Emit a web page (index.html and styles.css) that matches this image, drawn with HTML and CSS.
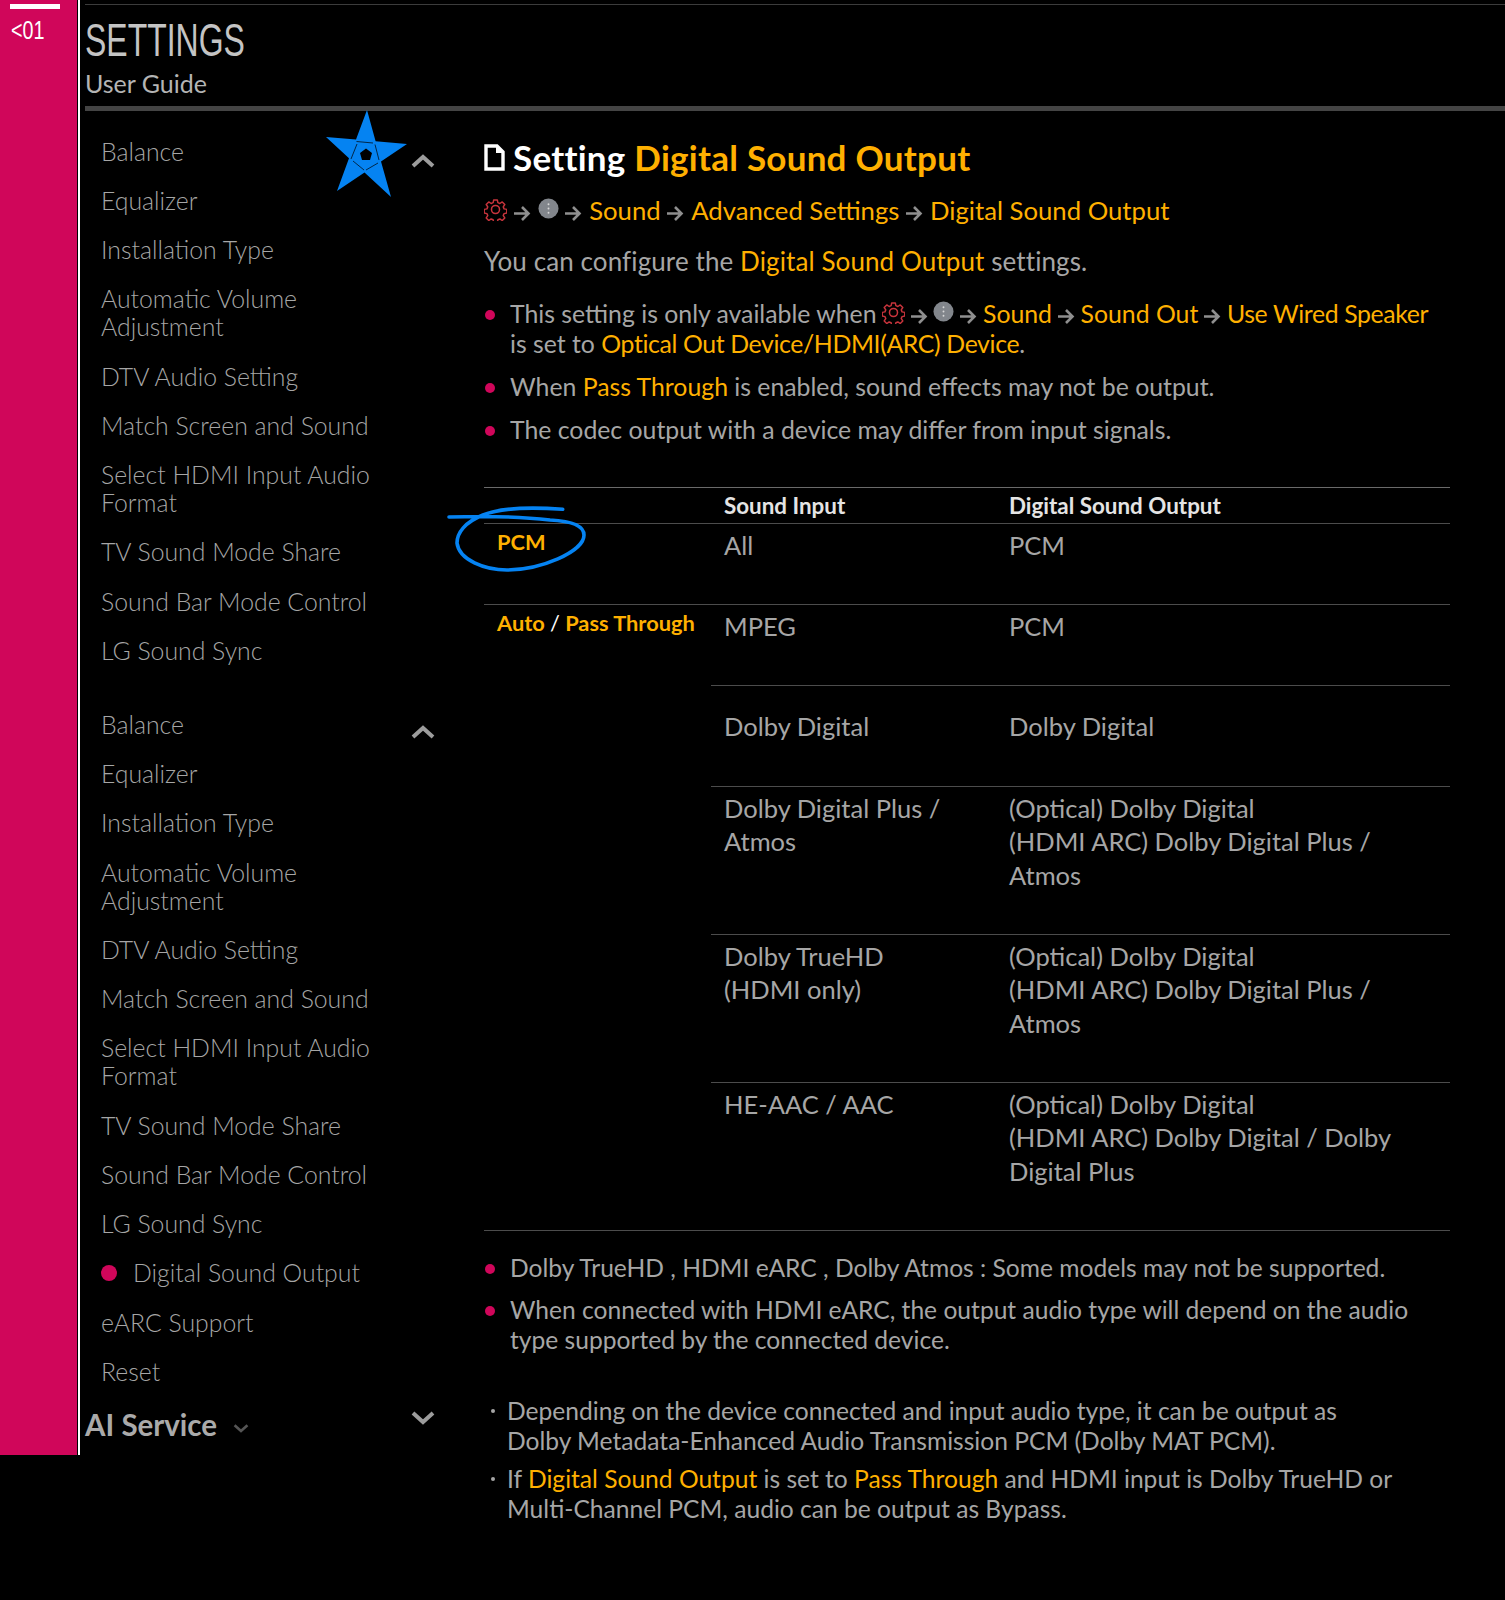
FILE: index.html
```html
<!DOCTYPE html>
<html lang="en">
<head>
<meta charset="utf-8">
<title>Settings - User Guide</title>
<link rel="stylesheet" href="styles.css">
</head>
<body>
<svg class="defs" width="0" height="0" aria-hidden="true">
  <symbol id="gear" viewBox="0 0 24 24">
    <g fill="none" stroke="#c8343c" stroke-width="1.6" stroke-linejoin="round">
      <path d="M10 1.5h4l.6 3 2.2.9 2.6-1.7 2.8 2.8-1.7 2.6.9 2.2 3 .6v4l-3 .6-.9 2.2 1.7 2.6-2.8 2.8-2.6-1.7-2.2.9-.6 3h-4l-.6-3-2.2-.9-2.6 1.7-2.8-2.8 1.7-2.6-.9-2.2-3-.6v-4l3-.6.9-2.2-1.700-2.600 2.800-2.800 2.600 1.700 2.200-.9z" transform="translate(0.6 0.6) scale(.95)"/>
      <circle cx="12" cy="12" r="4.2"/>
    </g>
  </symbol>
  <symbol id="info" viewBox="0 0 22 22">
    <circle cx="11" cy="11" r="10.500" fill="#82868c"/>
    <circle cx="11" cy="6.500" r="1" fill="#d8d8d8"/>
    <circle cx="11" cy="11" r="1" fill="#d8d8d8"/>
    <circle cx="11" cy="15.500" r="1" fill="#d8d8d8"/>
  </symbol>
  <symbol id="arrow" viewBox="0 0 17 17">
    <path d="M0 8.500h14M8 2l6.500 6.500L8 15" fill="none" stroke="#8f8f8f" stroke-width="2.600"/>
  </symbol>
  <symbol id="chev" viewBox="0 0 24 14">
    <path d="M2 12 12 3l10 9" fill="none" stroke="currentColor" stroke-width="4"/>
  </symbol>
</svg>

<div class="rail">
  <div class="rail-fill">
    <div class="rail-bar"></div>
    <div class="rail-num">&lt;01</div>
  </div>
</div>

<div class="page">
  <header class="head">
    <h1 class="head-title">SETTINGS</h1>
    <p class="head-sub">User Guide</p>
  </header>

  <div class="cols">
    <nav class="side">
      <ul class="menu">
        <li class="menu-top"><span>Balance</span><svg class="chev"><use href="#chev"/></svg></li>
        <li>Equalizer</li>
        <li>Installation Type</li>
        <li>Automatic Volume<br>Adjustment</li>
        <li>DTV Audio Setting</li>
        <li>Match Screen and Sound</li>
        <li>Select HDMI Input Audio<br>Format</li>
        <li>TV Sound Mode Share</li>
        <li>Sound Bar Mode Control</li>
        <li>LG Sound Sync</li>
      </ul>
      <ul class="menu menu-second">
        <li class="menu-top"><span>Balance</span><svg class="chev chev-second"><use href="#chev"/></svg></li>
        <li>Equalizer</li>
        <li>Installation Type</li>
        <li>Automatic Volume<br>Adjustment</li>
        <li>DTV Audio Setting</li>
        <li>Match Screen and Sound</li>
        <li>Select HDMI Input Audio<br>Format</li>
        <li>TV Sound Mode Share</li>
        <li>Sound Bar Mode Control</li>
        <li>LG Sound Sync</li>
        <li class="menu-active"><i class="menu-dot"></i>Digital Sound Output</li>
        <li>eARC Support</li>
        <li>Reset</li>
      </ul>
      <div class="ai">
        <span class="ai-label">AI Service</span>
        <svg class="ai-small"><use href="#chev"/></svg>
        <svg class="chev chev-down"><use href="#chev"/></svg>
      </div>
    </nav>

    <main class="main">
      <h2 class="title">
        <svg class="doc" viewBox="0 0 21 27"><path d="M2 2h11l6 6v17H2z" fill="none" stroke="#fff" stroke-width="3.400"/><path d="M12 2v7h7z" fill="#fff"/></svg>
        <span>Setting <em>Digital Sound Output</em></span>
      </h2>
      <p class="crumb"><svg class="ico-gear"><use href="#gear"/></svg><svg class="ico-arrow"><use href="#arrow"/></svg><svg class="ico-info"><use href="#info"/></svg><svg class="ico-arrow"><use href="#arrow"/></svg><em>Sound</em><svg class="ico-arrow"><use href="#arrow"/></svg><em>Advanced Settings</em><svg class="ico-arrow"><use href="#arrow"/></svg><em>Digital Sound Output</em></p>
      <p class="intro">You can configure the <em>Digital Sound Output</em> settings.</p>
      <ul class="dots dots-a">
        <li>This setting is only available when <svg class="ico-gear"><use href="#gear"/></svg><svg class="ico-arrow"><use href="#arrow"/></svg><svg class="ico-info"><use href="#info"/></svg><svg class="ico-arrow"><use href="#arrow"/></svg><em>Sound</em><svg class="ico-arrow"><use href="#arrow"/></svg><em>Sound Out</em><svg class="ico-arrow"><use href="#arrow"/></svg><em class="tight">Use Wired Speaker</em><br>is set to <em class="tight">Optical Out Device/HDMI(ARC) Device</em>.</li>
        <li>When <em>Pass Through</em> is enabled, sound effects may not be output.</li>
        <li>The codec output with a device may differ from input signals.</li>
      </ul>

      <table class="grid">
        <colgroup><col class="c1"><col class="c2"><col class="c3"></colgroup>
        <thead>
          <tr><th></th><th>Sound Input</th><th>Digital Sound Output</th></tr>
        </thead>
        <tbody>
          <tr><td class="mode">PCM</td><td>All</td><td>PCM</td></tr>
          <tr><td class="mode" rowspan="5">Auto <b>/</b> Pass Through</td><td>MPEG</td><td>PCM</td></tr>
          <tr class="tall"><td>Dolby Digital</td><td>Dolby Digital</td></tr>
          <tr><td>Dolby Digital Plus /<br>Atmos</td><td>(Optical) Dolby Digital<br>(HDMI ARC) Dolby Digital Plus /<br>Atmos</td></tr>
          <tr><td>Dolby TrueHD<br>(HDMI only)</td><td>(Optical) Dolby Digital<br>(HDMI ARC) Dolby Digital Plus /<br>Atmos</td></tr>
          <tr><td>HE-AAC / AAC</td><td>(Optical) Dolby Digital<br>(HDMI ARC) Dolby Digital / Dolby<br>Digital Plus</td></tr>
        </tbody>
      </table>

      <ul class="dots dots-b">
        <li>Dolby TrueHD , HDMI eARC , Dolby Atmos : Some models may not be supported.</li>
        <li>When connected with HDMI eARC, the output audio type will depend on the audio<br>type supported by the connected device.</li>
      </ul>
      <ul class="notes">
        <li>Depending on the device connected and input audio type, it can be output as<br>Dolby Metadata-Enhanced Audio Transmission PCM (Dolby MAT PCM).</li>
        <li>If <em>Digital Sound Output</em> is set to <em>Pass Through</em> and HDMI input is Dolby TrueHD or<br>Multi-Channel PCM, audio can be output as Bypass.</li>
      </ul>
    </main>
  </div>
</div>

<svg class="mark-star" viewBox="0 0 90 95" aria-hidden="true">
  <path fill-rule="evenodd" fill="#0583f2" d="M47 5 55.600 36.300 87 39 61 56.500 71 92 44.500 67.500 17 86 29 53.300 6 32 36 34.600zM46 43.500 40 48 42 55 50 55 52 48z"/>
  <path fill="none" stroke="#000" stroke-width=".7" d="M36.500 36.500 53 38M37 39 31 54M55 39.500 59 55M33 56 44 65M58 58 46 65"/>
</svg>
<svg class="mark-loop" viewBox="0 0 150 70" aria-hidden="true">
  <path fill="none" stroke="#0583f2" stroke-width="3.600" stroke-linecap="round" d="M122.700 4.300C90 2 60 3 43 10 25 17 17 28 17 38c2 17 28 27 50 27 33 0 77-18 77-35 0-10-14-14-34-15C75 11 40 11 9 12"/>
</svg>
</body>
</html>
```

FILE: styles.css
```css
* { box-sizing: border-box; }
html, body { margin: 0; padding: 0; background: #000; }
body {
  position: relative;
  display: flex;
  align-items: flex-start;
  min-height: 1600px;
  font-family: Lato, "Open Sans", sans-serif;
  color: #a6a6a6;
}
ul { list-style: none; margin: 0; padding: 0; }
p, h1, h2 { margin: 0; }
em { font-style: normal; color: #ffb000; }
em.tight { letter-spacing: -.36px; }
svg { overflow: visible; }
.defs { position: absolute; }

.rail {
  flex: 0 0 80px;
  height: 1455px;
  border-right: 2px solid #fff;
}
.rail-fill {
  width: 77px;
  height: 100%;
  background: #d0065a;
  padding: 4px 0 0 10px;
}
.rail-bar { width: 50px; height: 5px; background: #fff; }
.rail-num {
  margin: 6px 0 0 1px;
  font-family: "Liberation Sans", sans-serif;
  font-size: 26px;
  line-height: 30px;
  color: #fff;
  transform: scaleX(.76);
  transform-origin: left center;
}

.page { flex: 1; min-width: 0; padding-left: 5px; }
.head {
  margin-top: 4px;
  border-top: 1px solid #3c3c3c;
  border-bottom: 5px solid #444;
  height: 107px;
}
.head-title {
  margin-top: 13px;
  font-family: "Liberation Sans", sans-serif;
  font-weight: 400;
  font-size: 47px;
  line-height: 44px;
  color: #c4c4c4;
  transform: scaleX(.68);
  transform-origin: left center;
}
.head-sub {
  margin-top: 6px;
  font-size: 25px;
  line-height: 30px;
  color: #b4b4b4;
}

.cols { display: flex; align-items: flex-start; }
.side { flex: 0 0 399px; padding-top: 26.500px; }
.menu { padding-left: 16px; font-size: 24.800px; line-height: 28px; font-weight: 300; }
.menu li { margin-bottom: 21.250px; }
.menu-second { margin-top: 46px; }
.menu-top { display: flex; justify-content: space-between; height: 28px; }
.chev { width: 24px; height: 14px; margin: 16.500px 49px 0 0; color: #9c9c9c; }
.chev-second { margin-top: 14.500px; }
.menu-active { display: flex; align-items: center; }
.menu-dot { width: 16px; height: 16px; border-radius: 50%; background: #d0065a; margin-right: 16px; }
.ai { display: flex; align-items: center; height: 40px; margin-top: -3px; }
.ai-label { font-size: 29.500px; font-weight: 700; color: #aaa; }
.ai-small { width: 16px; height: 9px; margin: 8px 0 0 16px; color: #555; transform: scaleY(-1); }
.chev-down { margin: -12px 49px 0 auto; transform: scaleY(-1); }

.main { flex: 0 0 966px; padding-top: 26px; font-size: 24.800px; line-height: 30px; }
.title { display: flex; align-items: center; gap: 8px; font-size: 35px; line-height: 40px; font-weight: 700; letter-spacing: .25px; color: #fff; }
.doc { width: 21px; height: 27px; }
.crumb { margin-top: 18px; font-size: 25.700px; }
.intro { margin-top: 21px; font-size: 26px; letter-spacing: .1px; }
.ico-gear { width: 23px; height: 23px; vertical-align: -1px; }
.ico-info { width: 21px; height: 21px; vertical-align: 1px; margin: 0; }
.ico-arrow { width: 17px; height: 17px; vertical-align: -2px; margin: 0 6.800px; }
.dots .ico-arrow { margin: 0 5.800px; }
.dots .ico-gear { margin-left: -1px; }

.dots li { position: relative; padding-left: 26px; margin-bottom: 13px; }
.dots li::before {
  content: "";
  position: absolute;
  left: 1px;
  top: 11px;
  width: 10px;
  height: 10px;
  border-radius: 50%;
  background: #d0065a;
}
.dots-a { margin-top: 23px; }
.dots-b { margin-top: 22px; font-size: 24.600px; }
.dots-b li { margin-bottom: 12px; }

.grid { margin-top: 42px; width: 966px; border-collapse: collapse; table-layout: fixed; border-bottom: 1px solid #4c4c4c; }
.c1 { width: 227px; }
.c2 { width: 285px; }
.c3 { width: 454px; }
.grid th {
  height: 36px;
  padding: 0 13px;
  border-top: 1px solid #6a6a6a;
  font-size: 22.400px;
  line-height: 25px;
  font-weight: 700;
  color: #e4e4e4;
  text-align: left;
}
.grid td {
  padding: 5px 13px 41.500px;
  border-top: 1px solid #4c4c4c;
  font-size: 25.500px;
  line-height: 33.500px;
  vertical-align: top;
}
.grid .tall td { padding: 24px 13px 42px; }
.grid .mode { padding: 5px 0 0 13px; font-size: 21.800px; line-height: 25px; font-weight: 700; color: #ffb000; white-space: nowrap; }
.mode b { color: #fff; font-weight: 400; }

.notes { margin-top: 41px; font-size: 24.600px; }
.notes li { position: relative; padding-left: 23px; margin-bottom: 8px; }
.notes li::before {
  content: "";
  position: absolute;
  left: 7px;
  top: 13px;
  width: 4px;
  height: 4px;
  border-radius: 50%;
  background: #a6a6a6;
}

.mark-star { position: absolute; left: 320px; top: 105px; width: 90px; height: 95px; }
.mark-loop { position: absolute; left: 440px; top: 505px; width: 150px; height: 70px; }
```
